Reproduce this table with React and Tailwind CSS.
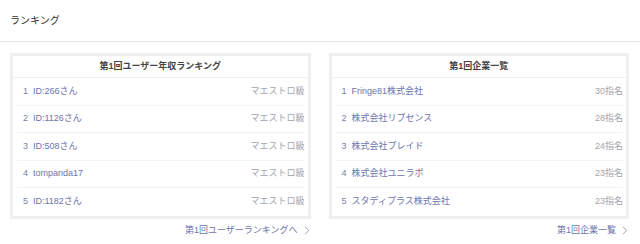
import React from "react";

const users = [
  { rank: 1, name: "ID:266さん", value: "マエストロ級" },
  { rank: 2, name: "ID:1126さん", value: "マエストロ級" },
  { rank: 3, name: "ID:508さん", value: "マエストロ級" },
  { rank: 4, name: "tompanda17", value: "マエストロ級" },
  { rank: 5, name: "ID:1182さん", value: "マエストロ級" },
];

const companies = [
  { rank: 1, name: "Fringe81株式会社", value: "30指名" },
  { rank: 2, name: "株式会社リブセンス", value: "28指名" },
  { rank: 3, name: "株式会社プレイド", value: "24指名" },
  { rank: 4, name: "株式会社ユニラボ", value: "23指名" },
  { rank: 5, name: "スタディプラス株式会社", value: "23指名" },
];

function RankingCard({ title, items, linkText }) {
  return (
    <div className="flex flex-col">
      <div className="border-[3px] border-[#efefef] bg-white">
        <div className="h-[22px] flex items-center justify-center border-b border-[#f0f0f0] text-[9px] font-bold text-[#444]">
          {title}
        </div>
        <div className="pl-1 pr-[3px]">
          {items.map((item, i) => (
            <div
              key={item.rank}
              className={
                "h-[27.6px] flex items-center justify-between pl-[6px] text-[9px] " +
                (i < items.length - 1 ? "border-b border-[#f3f3f3]" : "")
              }
            >
              <div className="flex items-center gap-[5px] text-[#6b74ad]">
                <span className="text-[#7c80a0]">{item.rank}</span>
                <span>{item.name}</span>
              </div>
              <span className="text-[#a3a3ad]">{item.value}</span>
            </div>
          ))}
        </div>
      </div>
      <div className="flex justify-end items-center gap-[6px] pt-[5px] text-[9px] text-[#6b74ad]">
        <span>{linkText}</span>
        <svg width="6" height="9" viewBox="0 0 6 9" className="mr-[1px]">
          <path d="M1 0.8 L4.8 4.5 L1 8.2" fill="none" stroke="#a0a3b5" strokeWidth="1" />
        </svg>
      </div>
    </div>
  );
}

export default function App() {
  return (
    <div
      className="w-[640px] h-[244px] bg-white overflow-hidden"
      style={{ fontFamily: '"Liberation Sans", "Noto Sans CJK JP", sans-serif' }}
    >
      <div className="h-[42px] flex items-center px-[10px] border-b border-[#e6e4ee] text-[10px] text-[#333]">
        ランキング
      </div>
      <div className="grid grid-cols-2 gap-[18px] pl-[10px] pr-[11px] pt-[11px]">
        <RankingCard title="第1回ユーザー年収ランキング" items={users} linkText="第1回ユーザーランキングへ" />
        <RankingCard title="第1回企業一覧" items={companies} linkText="第1回企業一覧" />
      </div>
    </div>
  );
}
